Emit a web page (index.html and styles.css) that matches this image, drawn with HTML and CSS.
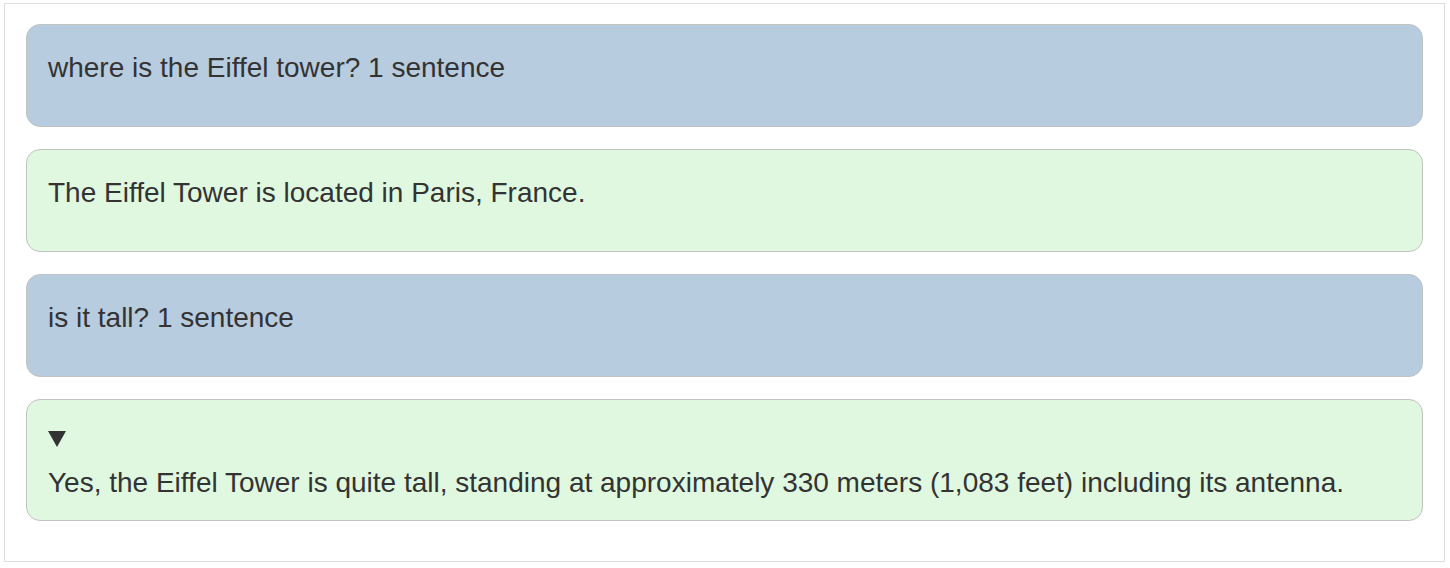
FILE: index.html
```html
<!DOCTYPE html>
<html>
<head>
<meta charset="utf-8">
<link rel="stylesheet" href="styles.css">
</head>
<body>
<div class="chat">
  <div class="bubble user"><div class="text spaced">where is the Eiffel tower? 1 sentence</div></div>
  <div class="bubble bot"><div class="text spaced">The Eiffel Tower is located in Paris, France.</div></div>
  <div class="bubble user"><div class="text spaced">is it tall? 1 sentence</div></div>
  <div class="bubble bot">
    <div class="summary"><svg class="marker" width="18" height="16" viewBox="0 0 18 16"><polygon points="0,0 18,0 9,16" fill="#333"/></svg></div>
    <div class="text">Yes, the Eiffel Tower is quite tall, standing at approximately 330 meters (1,083 feet) including its antenna.</div>
  </div>
</div>
</body>
</html>
```

FILE: styles.css
```css
html, body {
  margin: 0;
  padding: 0;
  background: #ffffff;
}
body {
  font-family: "Liberation Sans", Arial, Helvetica, sans-serif;
  color: #333333;
}
.chat {
  margin: 3px 5px 0 4px;
  width: 1441px;
  height: 559px;
  box-sizing: border-box;
  border: 1px solid #dddddd;
  padding: 20px 21px;
}
.bubble {
  border: 1px solid #c2c2c2;
  border-radius: 14px;
  padding: 26px 21px 20px 21px;
  margin-bottom: 22px;
}
.bubble:last-child {
  margin-bottom: 0;
}
.user {
  background: #b8cce0;
}
.bot {
  background: #e0f8e0;
}
.text {
  font-size: 28px;
  line-height: 34px;
}
.text.spaced {
  margin-bottom: 21px;
}
.summary {
  height: 35px;
}
.marker {
  display: block;
  margin-top: 5px;
}
```
